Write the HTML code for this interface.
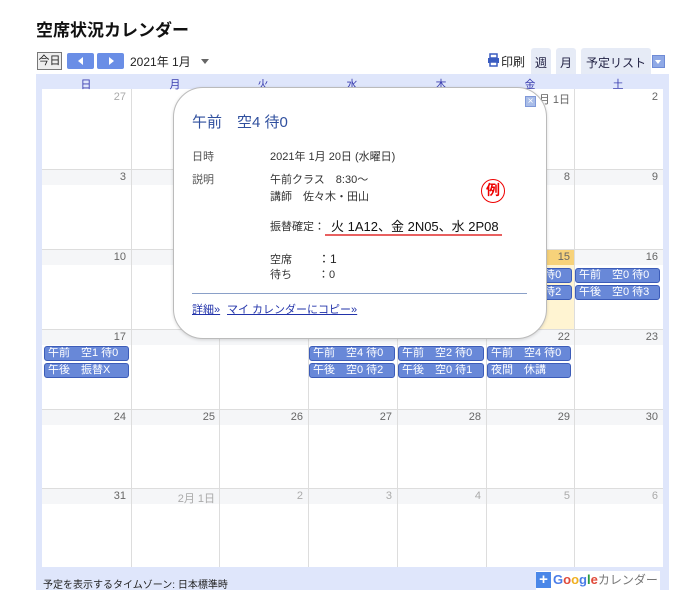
<!DOCTYPE html>
<html><head><meta charset="utf-8"><style>
*{margin:0;padding:0;box-sizing:border-box}
body{width:700px;height:615px;background:#fff;font-family:"Liberation Sans","Noto Sans CJK JP",sans-serif;position:relative;overflow:hidden;color:#222}
.a{position:absolute}
.t{font-size:17px;font-weight:bold;left:36px;top:16px;color:#111}
.frame{left:36px;top:74px;width:633px;height:516px;background:#dfe6fb}
.grid{left:42px;top:89px;width:621px;height:478px;background:#fff}
.dn{top:76px;font-size:11px;color:#3b3fb0;width:88px;text-align:center}
.vl{width:1px;background:#ddd;top:89px;height:478px}
.hl{height:1px;background:#ddd;left:42px;width:621px}
.band{height:15px;background:#f5f6f8;left:42px;width:621px}
.n{font-size:11px;color:#666;text-align:right;width:84px}
.g{color:#aaa}
.ev{height:15px;background:#6888d8;border:1px solid #3c5cb8;border-radius:3px;color:#fff;font-size:11px;line-height:13px;padding-left:3px;white-space:nowrap;overflow:hidden}
.pop{left:173px;top:87px;width:374px;height:252px;background:#fff;border:1px solid #bbb;border-radius:30px;box-shadow:0 1px 3px rgba(0,0,0,.15)}
.p{font-size:11px;color:#333;white-space:nowrap}
.btn{font-size:11px}
</style></head><body>
<div class="a t">空席状況カレンダー</div>
<div class="a btn" style="left:37px;top:52px;width:25px;height:18px;border:1px solid #777;background:#eee;text-align:center;line-height:16px">今日</div>
<div class="a" style="left:67px;top:53px;width:27px;height:16px;background:#6a8ee6;border-radius:2px"></div>
<div class="a" style="left:78px;top:57px;width:0;height:0;border-right:5px solid #fff;border-top:4px solid transparent;border-bottom:4px solid transparent"></div>
<div class="a" style="left:97px;top:53px;width:27px;height:16px;background:#6a8ee6;border-radius:2px"></div>
<div class="a" style="left:109px;top:57px;width:0;height:0;border-left:5px solid #fff;border-top:4px solid transparent;border-bottom:4px solid transparent"></div>
<div class="a" style="left:130px;top:53px;font-size:12px;color:#222">2021年 1月</div>
<div class="a" style="left:201px;top:59px;border-top:5px solid #666;border-left:4px solid transparent;border-right:4px solid transparent"></div>
<svg class="a" style="left:487px;top:53px" width="13" height="14" viewBox="0 0 13 14"><rect x="3" y="1" width="7" height="4" fill="none" stroke="#3a5cc0" stroke-width="1.5"/><rect x="1" y="5" width="11" height="5" fill="#3a5cc0"/><rect x="3" y="9" width="7" height="4" fill="#fff" stroke="#3a5cc0" stroke-width="1.5"/></svg>
<div class="a" style="left:501px;top:53px;font-size:12px;color:#222">印刷</div>
<div class="a" style="left:531px;top:48px;width:20px;height:26px;background:#e6ebf6;border-radius:3px 3px 0 0;font-size:12px;text-align:center;padding-top:6px;color:#224">週</div>
<div class="a" style="left:556px;top:48px;width:20px;height:26px;background:#e6ebf6;border-radius:3px 3px 0 0;font-size:12px;text-align:center;padding-top:6px;color:#224">月</div>
<div class="a" style="left:581px;top:48px;width:70px;height:26px;background:#e6ebf6;border-radius:3px 3px 0 0;font-size:12px;text-align:center;padding-top:6px;color:#224">予定リスト</div>
<div class="a" style="left:652px;top:55px;width:13px;height:13px;background:#8fa9e6;border:1px solid #6f8bd6"></div>
<div class="a" style="left:655px;top:60px;border-top:4px solid #fff;border-left:3.5px solid transparent;border-right:3.5px solid transparent"></div>

<div class="a frame"></div>
<div class="a grid"></div>
<div class="a dn" style="left:42px">日</div><div class="a dn" style="left:131px">月</div><div class="a dn" style="left:219px">火</div><div class="a dn" style="left:308px">水</div><div class="a dn" style="left:397px">木</div><div class="a dn" style="left:486px">金</div><div class="a dn" style="left:574px">土</div>

<div class="a band" style="top:250px"></div><div class="a band" style="top:330px"></div><div class="a band" style="top:410px"></div><div class="a band" style="top:489px"></div><div class="a band" style="top:170px"></div>
<div class="a" style="left:486px;top:250px;width:88px;height:15px;background:#f7d27a"></div>
<div class="a" style="left:486px;top:265px;width:88px;height:64px;background:#fff4d2"></div>

<div class="a vl" style="left:131px"></div><div class="a vl" style="left:219px"></div><div class="a vl" style="left:308px"></div><div class="a vl" style="left:397px"></div><div class="a vl" style="left:486px"></div><div class="a vl" style="left:574px"></div>
<div class="a hl" style="top:169px"></div><div class="a hl" style="top:249px"></div><div class="a hl" style="top:329px"></div><div class="a hl" style="top:409px"></div><div class="a hl" style="top:488px"></div>

<!-- numbers -->
<div class="a n g" style="left:42px;top:91px">27</div><div class="a n" style="left:486px;top:91px">1月 1日</div><div class="a n" style="left:574px;top:91px">2</div>
<div class="a n" style="left:42px;top:171px">3</div><div class="a n" style="left:486px;top:171px">8</div><div class="a n" style="left:574px;top:171px">9</div>
<div class="a n" style="left:42px;top:251px">10</div><div class="a n" style="left:486px;top:251px">15</div><div class="a n" style="left:574px;top:251px">16</div>
<div class="a n" style="left:42px;top:331px">17</div><div class="a n" style="left:486px;top:331px">22</div><div class="a n" style="left:574px;top:331px">23</div>
<div class="a n" style="left:42px;top:411px">24</div><div class="a n" style="left:131px;top:411px">25</div><div class="a n" style="left:219px;top:411px">26</div><div class="a n" style="left:308px;top:411px">27</div><div class="a n" style="left:397px;top:411px">28</div><div class="a n" style="left:486px;top:411px">29</div><div class="a n" style="left:574px;top:411px">30</div>
<div class="a n" style="left:42px;top:490px">31</div><div class="a n g" style="left:131px;top:490px">2月 1日</div><div class="a n g" style="left:219px;top:490px">2</div><div class="a n g" style="left:308px;top:490px">3</div><div class="a n g" style="left:397px;top:490px">4</div><div class="a n g" style="left:486px;top:490px">5</div><div class="a n g" style="left:574px;top:490px">6</div>

<!-- events -->
<div class="a ev" style="left:487px;top:268px;width:85px">午前　空4 待0</div>
<div class="a ev" style="left:487px;top:285px;width:85px">午後　空0 待2</div>
<div class="a ev" style="left:575px;top:268px;width:85px">午前　空0 待0</div>
<div class="a ev" style="left:575px;top:285px;width:85px">午後　空0 待3</div>
<div class="a ev" style="left:44px;top:346px;width:85px">午前　空1 待0</div>
<div class="a ev" style="left:44px;top:363px;width:85px">午後　振替X</div>
<div class="a ev" style="left:309px;top:346px;width:86px">午前　空4 待0</div>
<div class="a ev" style="left:309px;top:363px;width:86px">午後　空0 待2</div>
<div class="a ev" style="left:398px;top:346px;width:86px">午前　空2 待0</div>
<div class="a ev" style="left:398px;top:363px;width:86px">午後　空0 待1</div>
<div class="a ev" style="left:487px;top:346px;width:84px">午前　空4 待0</div>
<div class="a ev" style="left:487px;top:363px;width:84px">夜間　休講</div>

<!-- popup -->
<div class="a pop"></div>
<div class="a" style="left:525px;top:96px;width:11px;height:11px;background:#a9bde8;border:1px solid #7f98d8;color:#fff;font-size:10px;line-height:9px;text-align:center">×</div>
<div class="a" style="left:192px;top:111px;font-size:15px;color:#2f4f9e">午前　空4 待0</div>
<div class="a p" style="left:192px;top:148px;color:#555">日時</div>
<div class="a p" style="left:270px;top:148px">2021年 1月 20日 (水曜日)</div>
<div class="a p" style="left:192px;top:171px;color:#555">説明</div>
<div class="a p" style="left:270px;top:171px">午前クラス　8:30～</div>
<div class="a p" style="left:270px;top:188px">講師　佐々木・田山</div>
<div class="a" style="left:481px;top:179px;width:24px;height:24px;border:1.5px solid #e00;border-radius:50%;color:#e00;font-size:14px;font-weight:bold;text-align:center;line-height:21px">例</div>
<div class="a p" style="left:270px;top:218px">振替確定：</div>
<div class="a" style="left:331px;top:216px;font-size:13px;color:#111;white-space:nowrap">火 1A12、金 2N05、水 2P08</div>
<div class="a" style="left:325px;top:234px;width:177px;height:2px;background:#e86060"></div>
<div class="a p" style="left:270px;top:251px">空席</div><div class="a" style="left:318px;top:250px;font-size:12px">：1</div>
<div class="a p" style="left:270px;top:266px">待ち</div><div class="a p" style="left:318px;top:266px">：0</div>
<div class="a" style="left:192px;top:293px;width:335px;height:1px;background:#8aa0c8"></div>
<div class="a p" style="left:192px;top:301px;color:#2233aa;text-decoration:underline">詳細»</div>
<div class="a p" style="left:227px;top:301px;color:#2233aa;text-decoration:underline">マイ カレンダーにコピー»</div>

<!-- footer -->
<div class="a" style="left:43px;top:576px;font-size:10px;color:#222">予定を表示するタイムゾーン: 日本標準時</div>
<div class="a" style="left:536px;top:571px;width:124px;height:19px;background:#fff"></div>
<div class="a" style="left:536px;top:572px;width:15px;height:16px;background:#4a87e8;color:#fff;font-weight:bold;font-size:15px;line-height:15px;text-align:center">+</div>
<div class="a" style="left:553px;top:571px;font-size:13px;font-weight:bold;white-space:nowrap"><span style="color:#4a7de8">G</span><span style="color:#e04a3a">o</span><span style="color:#f0b020">o</span><span style="color:#4a7de8">g</span><span style="color:#2a9a40">l</span><span style="color:#e04a3a">e</span><span style="font-weight:normal;color:#777;font-size:12px">カレンダー</span></div>
</body></html>
